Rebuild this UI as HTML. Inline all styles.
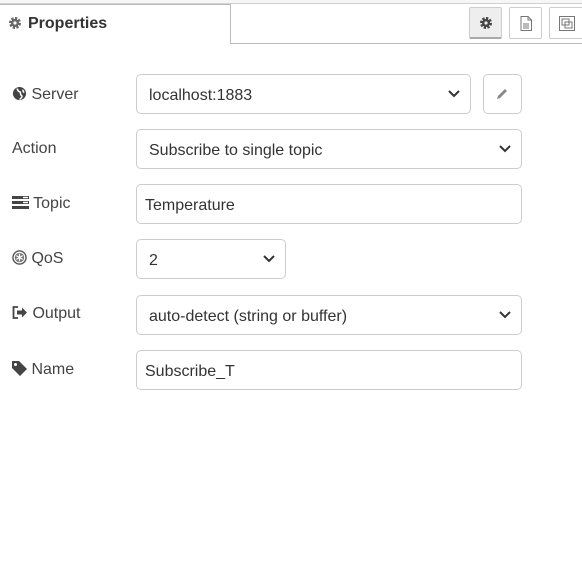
<!DOCTYPE html>
<html><head><style>
body{margin:0;width:582px;height:585px;background:#fff;font-family:"Liberation Sans",Arial,sans-serif;position:relative;overflow:hidden}
.top{position:absolute;left:0;top:0;width:582px;height:43px;border-bottom:1px solid #bbb;background:#fff}
.topline{position:absolute;left:0;top:0;width:582px;height:3px;background:#f6f6f6;border-bottom:1px solid #d0d0d0}
.tab{position:absolute;left:-1px;top:4px;width:232px;height:40px;background:#fff;border:1px solid #bbb;border-bottom:none;box-sizing:border-box}
.tab span{position:absolute;left:28px;top:10px;font-weight:bold;font-size:16px;color:#333}
.btn{position:absolute;top:7px;width:33px;height:32px;border:1px solid #ccc;box-sizing:border-box;background:#fff;border-radius:2px}
.lbl{position:absolute;left:12px;font-size:16px;color:#444}
.f{position:absolute;height:40px;border:1px solid #ccc;border-radius:5px;box-sizing:border-box;font-size:16px;color:#333;line-height:41px;background:#fff}
.chev{position:absolute;right:9px;top:14px}
</style></head><body>
<div class="top"></div><div class="topline"></div>
<div class="tab"><svg style="position:absolute;left:8px;top:11px" width="14" height="14" viewBox="0 0 14 14"><circle cx="7" cy="7" r="4.5" fill="none" stroke="#666" stroke-width="3" stroke-dasharray="2.2 1.3"/><circle cx="7" cy="7" r="4" fill="#666"/><circle cx="7" cy="7" r="1.6" fill="#fff"/></svg><span>Properties</span></div>
<div class="btn" style="left:469px;background:#eee;border-bottom:2px solid #aaa"><svg style="position:absolute;left:9px;top:8px" width="14" height="14" viewBox="0 0 14 14"><circle cx="7" cy="7" r="4.5" fill="none" stroke="#444" stroke-width="3" stroke-dasharray="2.2 1.3"/><circle cx="7" cy="7" r="4" fill="#444"/><circle cx="7" cy="7" r="1.6" fill="#eee"/></svg></div>
<div class="btn" style="left:509px"><svg style="position:absolute;left:10px;top:8px" width="12" height="15" viewBox="0 0 12 15"><path d="M1 .5h7l3.5 3.5v10.5H1z M8 .5v3.5h3.5 M3 8h6 M3 10h6 M3 12h6" fill="none" stroke="#777"/></svg></div>
<div class="btn" style="left:549px;width:40px"><svg style="position:absolute;left:8px;top:7px" width="18" height="17" viewBox="0 0 18 17"><rect x="1.5" y="1.5" width="15" height="14" fill="none" stroke="#777"/><rect x="4" y="4" width="7" height="6" fill="none" stroke="#777"/><rect x="7" y="7" width="7" height="6" fill="none" stroke="#777"/></svg></div>

<div class="lbl" style="top:86px"><svg width="15" height="15" viewBox="0 0 16 16" style="vertical-align:-2px"><circle cx="8" cy="8" r="7" fill="#444"/><path d="M5 3c2 1 1 3 3 3s0 3 2 4-1 4-2 4M12 4c-1 1 0 2 1 3" stroke="#fff" stroke-width="1.6" fill="none"/></svg> Server</div>
<div class="f" style="left:136px;top:74px;width:335px;padding-left:12px">localhost:1883<svg class="chev" width="14" height="10" viewBox="0 0 14 10"><path d="M2 2l5 5 5-5" fill="none" stroke="#333" stroke-width="2"/></svg></div>
<div class="f" style="left:483px;top:74px;width:39px"><svg style="position:absolute;left:12px;top:12px" width="13" height="13" viewBox="0 0 13 13"><path d="M1 12l1-3 7-7 2 2-7 7z" fill="#888"/></svg></div>

<div class="lbl" style="top:140px">Action</div>
<div class="f" style="left:136px;top:129px;width:386px;padding-left:12px">Subscribe to single topic<svg class="chev" width="14" height="10" viewBox="0 0 14 10"><path d="M2 2l5 5 5-5" fill="none" stroke="#333" stroke-width="2"/></svg></div>

<div class="lbl" style="top:195px"><svg width="17" height="13" viewBox="0 0 17 13" style="vertical-align:-1px"><rect x="0" y="0" width="17" height="3" fill="#444"/><rect x="0" y="5" width="17" height="3" fill="#444"/><rect x="0" y="10" width="17" height="3" fill="#444"/><rect x="11" y="5.8" width="5" height="1.4" fill="#fff"/><rect x="11" y="0.8" width="5" height="1.4" fill="#fff"/></svg> Topic</div>
<div class="f" style="left:136px;top:184px;width:386px;padding-left:8px">Temperature</div>

<div class="lbl" style="top:250px"><svg width="15" height="15" viewBox="0 0 16 16" style="vertical-align:-2px"><circle cx="8" cy="8" r="7" fill="none" stroke="#555" stroke-width="1.5"/><circle cx="8" cy="8" r="5" fill="#777"/><path d="M8 4v8M4.5 6l7 4M4.5 10l7-4" stroke="#fff" stroke-width="1.3"/></svg> QoS</div>
<div class="f" style="left:136px;top:239px;width:150px;padding-left:12px">2<svg class="chev" width="14" height="10" viewBox="0 0 14 10"><path d="M2 2l5 5 5-5" fill="none" stroke="#333" stroke-width="2"/></svg></div>

<div class="lbl" style="top:305px"><svg width="16" height="13" viewBox="0 0 16 13" style="vertical-align:-1px"><path d="M6 1H1.5v11H6" fill="none" stroke="#444" stroke-width="1.8"/><path d="M5 4.5h5V1.5l5 5-5 5v-3H5z" fill="#444"/></svg> Output</div>
<div class="f" style="left:136px;top:295px;width:386px;padding-left:12px">auto-detect (string or buffer)<svg class="chev" width="14" height="10" viewBox="0 0 14 10"><path d="M2 2l5 5 5-5" fill="none" stroke="#333" stroke-width="2"/></svg></div>

<div class="lbl" style="top:361px"><svg width="15" height="15" viewBox="0 0 15 15" style="vertical-align:-2px"><path d="M0 0h7l8 8-7 7-8-8z" fill="#444"/><circle cx="3.5" cy="3.5" r="1.5" fill="#fff"/></svg> Name</div>
<div class="f" style="left:136px;top:350px;width:386px;padding-left:8px">Subscribe_T</div>
</body></html>
